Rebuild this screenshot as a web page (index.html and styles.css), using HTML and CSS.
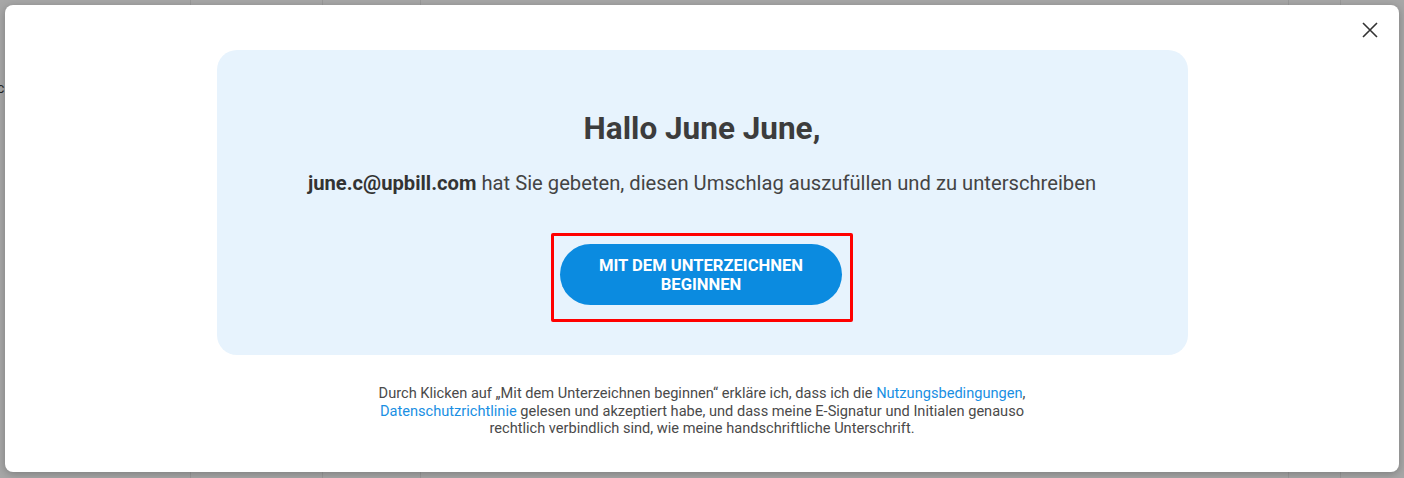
FILE: index.html
```html
<!DOCTYPE html>
<html lang="de">
<head>
<meta charset="utf-8">
<link rel="stylesheet" href="styles.css">
</head>
<body>
<div class="backdrop">
  <span class="bg-char">c</span>
  <div class="modal">
    <button class="close" aria-label="Schließen">
      <svg width="16" height="16" viewBox="0 0 16 16"><path d="M1 1L15 15M15 1L1 15" stroke="#333" stroke-width="1.6" fill="none"/></svg>
    </button>
    <div class="panel">
      <h1 class="title">Hallo June June,</h1>
      <p class="subtitle"><strong>june.c@upbill.com</strong> hat Sie gebeten, diesen Umschlag auszufüllen und zu unterschreiben</p>
      <div class="highlight">
        <button class="start">MIT DEM UNTERZEICHNEN<br>BEGINNEN</button>
      </div>
    </div>
    <p class="legal">Durch Klicken auf „Mit dem Unterzeichnen beginnen“ erkläre ich, dass ich die <a href="#">Nutzungsbedingungen</a>, <a href="#">Datenschutzrichtlinie</a> gelesen und akzeptiert habe, und dass meine E-Signatur und Initialen genauso rechtlich verbindlich sind, wie meine handschriftliche Unterschrift.</p>
  </div>
</div>
</body>
</html>
```
FILE: styles.css
```css
* { box-sizing: border-box; }
html, body { margin: 0; padding: 0; }
body {
  width: 1404px;
  height: 478px;
  overflow: hidden;
  font-family: Roboto, "Liberation Sans", sans-serif;
}
.backdrop {
  position: relative;
  width: 1404px;
  height: 478px;
  padding: 5px 5px 6px 5px;
  background-color: #a7a7a7;
  background-image:
    linear-gradient(#9a9a9a, #9a9a9a),
    linear-gradient(#9a9a9a, #9a9a9a),
    linear-gradient(#9a9a9a, #9a9a9a),
    linear-gradient(#9a9a9a, #9a9a9a),
    linear-gradient(#9a9a9a, #9a9a9a);
  background-size: 1px 478px;
  background-repeat: no-repeat;
  background-position: 190px 0, 322px 0, 420px 0, 1340px 0, 1288px 0;
}
.bg-char {
  position: absolute;
  left: -3px;
  top: 80px;
  font-size: 14px;
  color: #222;
}
.modal {
  position: relative;
  height: 467px;
  background: #fff;
  border-radius: 8px;
  box-shadow: 0 2px 8px rgba(0,0,0,0.25);
  display: flex;
  flex-direction: column;
  align-items: center;
  padding-top: 45px;
}
.close {
  position: absolute;
  top: 17px;
  right: 21px;
  width: 16px;
  height: 16px;
  padding: 0;
  border: 0;
  background: none;
  display: flex;
}
.panel {
  width: 971px;
  height: 305px;
  background: #e7f3fd;
  border-radius: 20px;
  display: flex;
  flex-direction: column;
  align-items: center;
  padding-top: 61px;
}
.title {
  margin: 0;
  font-size: 31.5px;
  line-height: 36px;
  font-weight: 700;
  color: #3c3c3c;
}
.subtitle {
  margin: 24px 0 0;
  font-size: 20.2px;
  line-height: 24px;
  color: #444;
}
.subtitle strong {
  color: #333;
  font-weight: 700;
}
.highlight {
  margin-top: 38px;
  border: 3px solid #ff0000;
  border-radius: 2px;
  padding: 8px 8px 14px 6px;
}
.start {
  width: 282px;
  height: 61px;
  border: 0;
  border-radius: 31px;
  background: #0b8be0;
  color: #fff;
  font-family: Roboto, "Liberation Sans", sans-serif;
  font-size: 16.6px;
  line-height: 19px;
  font-weight: 700;
  padding: 0;
}
.legal {
  margin: 30px 0 0;
  width: 660px;
  text-align: center;
  font-size: 14.6px;
  line-height: 17.5px;
  color: #4a4a4a;
}
.legal a {
  color: #1a8fe3;
  text-decoration: none;
}
```
